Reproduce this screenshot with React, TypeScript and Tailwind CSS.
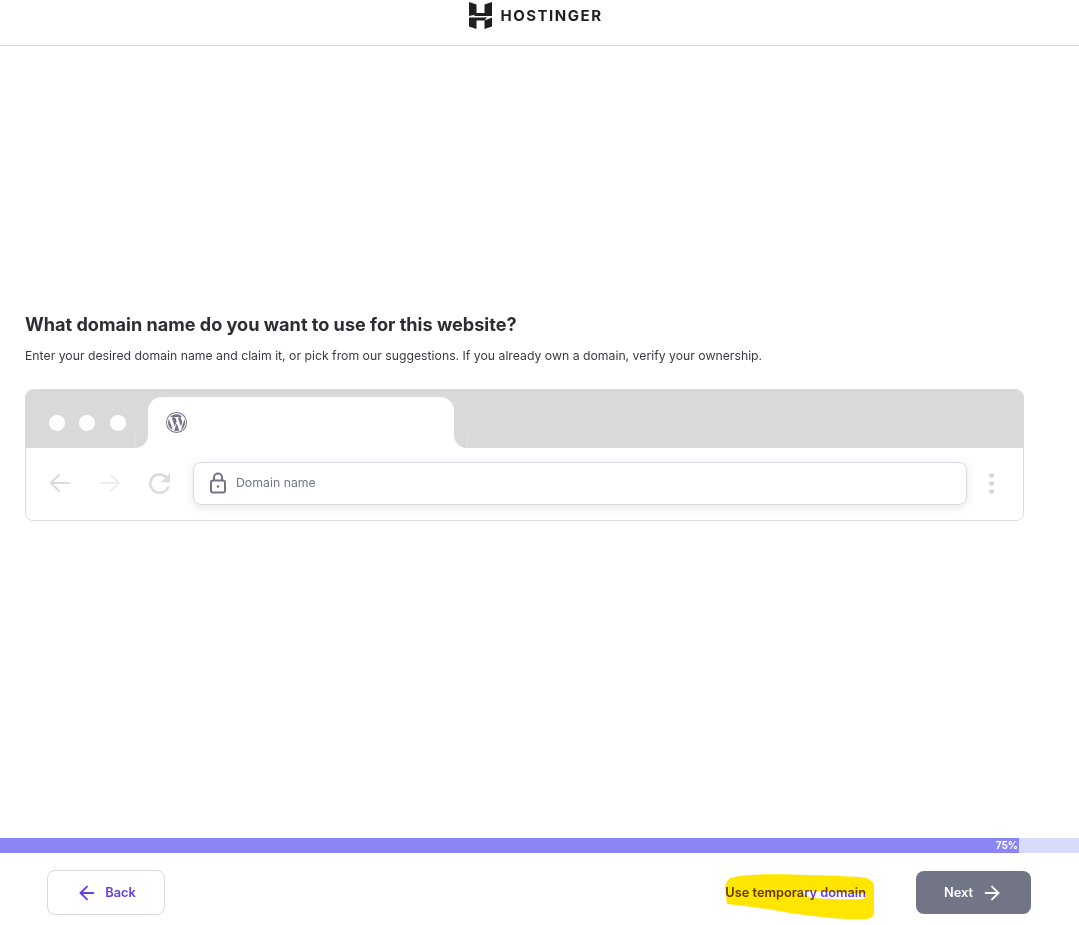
import { ArrowLeft, ArrowRight } from 'lucide-react';

function HostingerLogo() {
  return (
    <svg width="25" height="28" viewBox="0 0 25 28" fill="#1f1f1f">
      <path d="M1 1L8.500 3.500V13.500L1 15z" />
      <path d="M16.500 3.500L24 1V15H6L8.500 12H16.500z" />
      <path d="M1 16.500H19L16.500 19.500H8.500V28L1 25.500z" />
      <path d="M24 16.500V25.500L16.500 28V19.500z" />
    </svg>
  );
}

function WordpressIcon() {
  return (
    <svg width="23" height="23" viewBox="0 0 24 24" fill="#727586">
      <path fillRule="evenodd" d="M12 1a11 11 0 100 22 11 11 0 000-22zm0 1a10 10 0 110 20 10 10 0 010-20z" />
      <path d="M3.200 12a8.800 8.800 0 005 7.900L4 8.400A8.800 8.800 0 003.200 12zm14.700-.4c0-1.100-.4-1.800-.7-2.400-.4-.7-.8-1.300-.8-2 0-.8.6-1.500 1.400-1.500h.1A8.800 8.800 0 005.200 6.400h.6c.9 0 2.300-.1 2.300-.1.5 0 .5.700 0 .7 0 0-.5.100-1 .100l3.100 9.300 1.900-5.600-1.300-3.700c-.5 0-.9-.100-.9-.100-.5 0-.4-.800 0-.700 0 0 1.400.100 2.300.100.900 0 2.300-.100 2.300-.100.500 0 .5.700 0 .700 0 0-.5.100-1 .100l3.100 9.200.9-2.800c.4-1.200.6-2 .6-2.800zM12.200 12.900l-2.600 7.600a8.800 8.800 0 005.400-.100l-.1-.100zM19.800 7.900c0 .3.100.600.100 1 0 .900-.2 1.900-.7 3.200l-2.700 7.700A8.800 8.800 0 0019.800 7.900z" />
    </svg>
  );
}

function LockIcon() {
  return (
    <svg width="18" height="22" viewBox="0 0 18 22" fill="none" stroke="#727586" strokeWidth="2">
      <rect x="2" y="8.500" width="14" height="12" rx="2" />
      <path d="M5 8.500V5.500a4 4 0 018 0v3" />
      <circle cx="9" cy="14.500" r="1.300" fill="#727586" stroke="none" />
    </svg>
  );
}

function NavArrow({ flip, className }: { flip?: boolean; className: string }) {
  return (
    <svg
      width="22"
      height="22"
      viewBox="0 0 22 22"
      fill="none"
      stroke="currentColor"
      strokeWidth="2"
      className={className}
      style={flip ? { transform: 'scaleX(-1)' } : undefined}
    >
      <path d="M21 11H2M10.500 2.500L2 11l8.500 8.500" />
    </svg>
  );
}

function ReloadIcon() {
  return (
    <svg width="21" height="21" viewBox="4 4 16 16" fill="#dadce0" className="ml-[28px] shrink-0">
      <path d="M17.650 6.350A7.958 7.958 0 0012 4c-4.420 0-7.990 3.580-7.990 8s3.570 8 7.990 8c3.730 0 6.840-2.550 7.730-6h-2.080A5.990 5.990 0 0112 18c-3.310 0-6-2.690-6-6s2.690-6 6-6c1.660 0 3.140.690 4.220 1.780L13 11h7V4l-2.350 2.350z" />
    </svg>
  );
}

function Highlighter() {
  return (
    <svg
      className="absolute left-[-5px] top-[-13px] mix-blend-multiply pointer-events-none"
      width="156"
      height="50"
      viewBox="0 0 156 50"
      fill="#ffe600"
    >
      <path
        fillRule="evenodd"
        d="M10 8C30 3 60 4 90 5C115 6 135 6 146 8C152 10 154 13 154 17L154 42C154 47 150 49 145 49C125 50 100 47 70 43C50 39 25 36 7 34L5 17C6 13 8 10 10 8ZM80 21C100 22 125 22 146 24C146 26 146 27 143 29C125 30 105 29 95 28C88 27 83 24 80 21Z"
      />
    </svg>
  );
}

export default function App() {
  return (
    <div className="h-[925px] flex flex-col bg-white font-['Inter',sans-serif] overflow-hidden">
      {/* Header */}
      <header className="h-[46px] shrink-0 border-b border-[#d8dae0] flex justify-center pt-[1px]">
        <div className="flex items-start gap-[8px] ml-[-9px]">
          <HostingerLogo />
          <span className="text-[15px] leading-[30px] font-bold tracking-[1.5px] text-[#1f1f1f]">HOSTINGER</span>
        </div>
      </header>

      {/* Main */}
      <main className="flex-1 px-[25px] pt-[265px]">
        <h1 className="text-[18.1px] leading-[26px] font-bold text-[#2d2d33]">
          What domain name do you want to use for this website?
        </h1>
        <p className="mt-[10px] text-[12.25px] leading-[18px] text-[#3a3a42]">
          Enter your desired domain name and claim it, or pick from our suggestions. If you already own a domain, verify your ownership.
        </p>

        {/* Browser mock */}
        <div className="mt-[24px] w-[999px] h-[132px] rounded-[8px] border border-[#d8dae0] overflow-hidden">
          <div className="h-[58px] bg-[#d9d9d9] flex items-end pl-[23px]">
            <div className="flex gap-[14px] mb-[17px]">
              <span className="w-4 h-4 rounded-full bg-white" />
              <span className="w-4 h-4 rounded-full bg-white" />
              <span className="w-4 h-4 rounded-full bg-white ml-[1px]" />
            </div>
            <div className="relative ml-[22px] w-[306px] h-[51px] bg-white rounded-t-[14px] flex items-start pl-[17px] pt-[14px]">
              <WordpressIcon />
              {/* flared tab corners */}
              <div className="absolute left-[-14px] bottom-0 w-[14px] h-[14px] bg-white border-l border-[#e4e4e4]">
                <div className="w-full h-full bg-[#d9d9d9] rounded-br-[14px]" />
              </div>
              <div className="absolute right-[-14px] bottom-0 w-[14px] h-[14px] bg-white border-r border-[#e4e4e4]">
                <div className="w-full h-full bg-[#d9d9d9] rounded-bl-[14px]" />
              </div>
            </div>
          </div>
          <div className="h-[72px] bg-white flex items-center pl-[23px] pr-[29px] pb-[2px]">
            <NavArrow className="shrink-0 text-[#dadce0]" />
            <NavArrow flip className="ml-[28px] shrink-0 text-[#eceef0]" />
            <ReloadIcon />
            <div className="ml-[23px] flex-1 h-[43px] rounded-[8px] border border-[#d8dae0] shadow-[0_2px_10px_rgba(0,0,0,0.1)] flex items-center pl-[15px]">
              <LockIcon />
              <span className="ml-[9px] text-[12.3px] text-[#727586]">Domain name</span>
            </div>
            <div className="ml-[22px] flex flex-col gap-[3px]">
              <span className="w-[5px] h-[5px] rounded-full bg-[#d8dae0]" />
              <span className="w-[5px] h-[5px] rounded-full bg-[#d8dae0]" />
              <span className="w-[5px] h-[5px] rounded-full bg-[#d8dae0]" />
            </div>
          </div>
        </div>
      </main>

      {/* Progress */}
      <div className="h-[15px] shrink-0 bg-[#d8dcfa]">
        <div className="w-[1019px] h-full bg-[#8c85f8] flex items-center justify-end pr-[1px]">
          <span className="text-[10px] font-bold text-white">75%</span>
        </div>
      </div>

      {/* Footer */}
      <footer className="h-[72px] shrink-0 flex items-center justify-between pl-[47px] pr-[48px] pt-[7px]">
        <button className="w-[118px] h-[45px] rounded-[8px] border border-[#d8dae0] flex items-center justify-center gap-[7px] text-[12.8px] font-semibold text-[#673de6]">
          <ArrowLeft className="w-[22px] h-[22px]" strokeWidth={2} />
          Back
        </button>
        <div className="flex items-center gap-[50px]">
          <div className="relative text-[12.8px] font-semibold text-[#673de6]">
            Use temporary domain
            <Highlighter />
          </div>
          <button className="w-[115px] h-[43px] rounded-[8px] bg-[#727586] flex items-center justify-center gap-[8px] text-[12.8px] font-semibold text-white">
            Next
            <ArrowRight className="w-[22px] h-[22px]" strokeWidth={2} />
          </button>
        </div>
      </footer>
    </div>
  );
}
